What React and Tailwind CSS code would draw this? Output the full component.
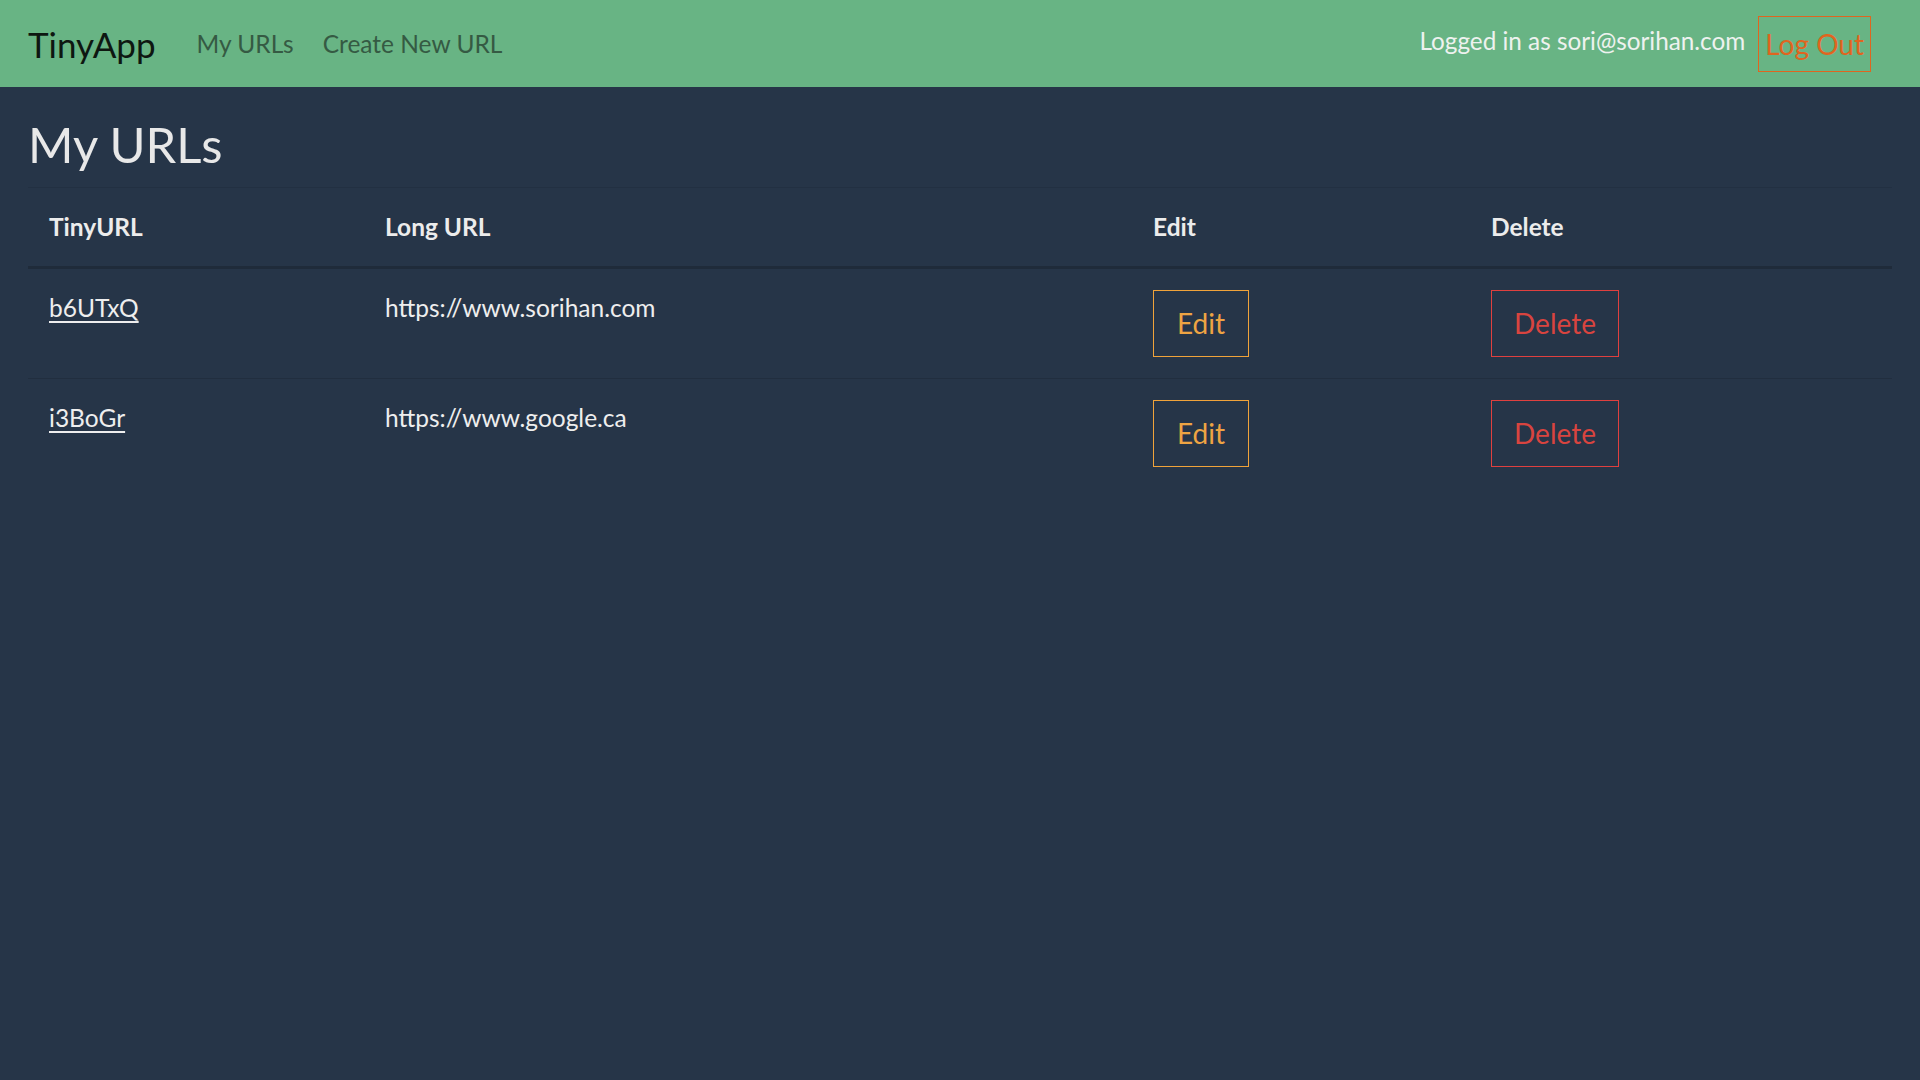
import React from "react";

const rows = [
  { short: "b6UTxQ", long: "https://www.sorihan.com" },
  { short: "i3BoGr", long: "https://www.google.ca" },
];

export default function App() {
  return (
    <div
      className="min-h-screen w-full bg-[#263548] text-[#eeeeee]"
      style={{ fontFamily: "Lato, 'Open Sans', sans-serif" }}
    >
      <nav className="h-[87px] bg-[#68b484] flex items-center pl-[28px] pr-[49px]">
        <a className="text-[35px] leading-[48px] text-[#0e1711]">TinyApp</a>
        <div className="flex items-center ml-[41px] gap-[29px] text-[24.5px] leading-[36px] text-[#355a43]">
          <a>My URLs</a>
          <a>Create New URL</a>
        </div>
        <div className="ml-auto flex items-center">
          <span className="text-[24.3px] leading-[36px] text-[#eef2ef] mb-[5px]">
            Logged in as sori@sorihan.com
          </span>
          <button className="ml-[13px] border border-[#e0651f] text-[#e0651f] text-[28px] leading-[42px] px-[6px] py-[6px] bg-transparent">
            Log Out
          </button>
        </div>
      </nav>

      <main className="px-[28px]">
        <h1 className="text-[49px] leading-[60px] text-[#e8e8e8] mt-[27px] mb-[13px] font-normal">
          My URLs
        </h1>
        <table className="w-full border-collapse table-fixed">
          <colgroup>
            <col className="w-[336px]" />
            <col className="w-[768px]" />
            <col className="w-[338px]" />
            <col />
          </colgroup>
          <thead>
            <tr>
              {["TinyURL", "Long URL", "Edit", "Delete"].map((h) => (
                <th
                  key={h}
                  className="text-left font-bold text-[24.5px] leading-[37px] text-[#ececec] px-[21px] pt-[20px] pb-[21px] border-t border-t-[#223042] border-b-[3px] border-b-[#1f2b3a]"
                >
                  {h}
                </th>
              ))}
            </tr>
          </thead>
          <tbody>
            {rows.map((r, i) => (
              <tr key={r.short}>
                <td
                  className={`align-top px-[21px] pt-[20px] pb-[21px] text-[24.5px] leading-[37px] ${
                    i > 0 ? "border-t border-t-[#212e3f]" : ""
                  }`}
                >
                  <a className="underline text-[#eeeeee] underline-offset-[4px] decoration-[1.5px]">
                    {r.short}
                  </a>
                </td>
                <td
                  className={`align-top px-[21px] pt-[20px] pb-[21px] text-[24.5px] leading-[37px] text-[#eeeeee] ${
                    i > 0 ? "border-t border-t-[#212e3f]" : ""
                  }`}
                >
                  {r.long}
                </td>
                <td
                  className={`align-top px-[21px] pt-[21px] pb-[21px] ${
                    i > 0 ? "border-t border-t-[#212e3f]" : ""
                  }`}
                >
                  <button className="border border-[#f0a33a] text-[#eea443] text-[28px] leading-[45px] px-[23px] py-[10px] bg-transparent">
                    Edit
                  </button>
                </td>
                <td
                  className={`align-top px-[21px] pt-[21px] pb-[21px] ${
                    i > 0 ? "border-t border-t-[#212e3f]" : ""
                  }`}
                >
                  <button className="border border-[#e0403f] text-[#d9443f] text-[28px] leading-[45px] px-[22px] py-[10px] bg-transparent">
                    Delete
                  </button>
                </td>
              </tr>
            ))}
          </tbody>
        </table>
      </main>
    </div>
  );
}
